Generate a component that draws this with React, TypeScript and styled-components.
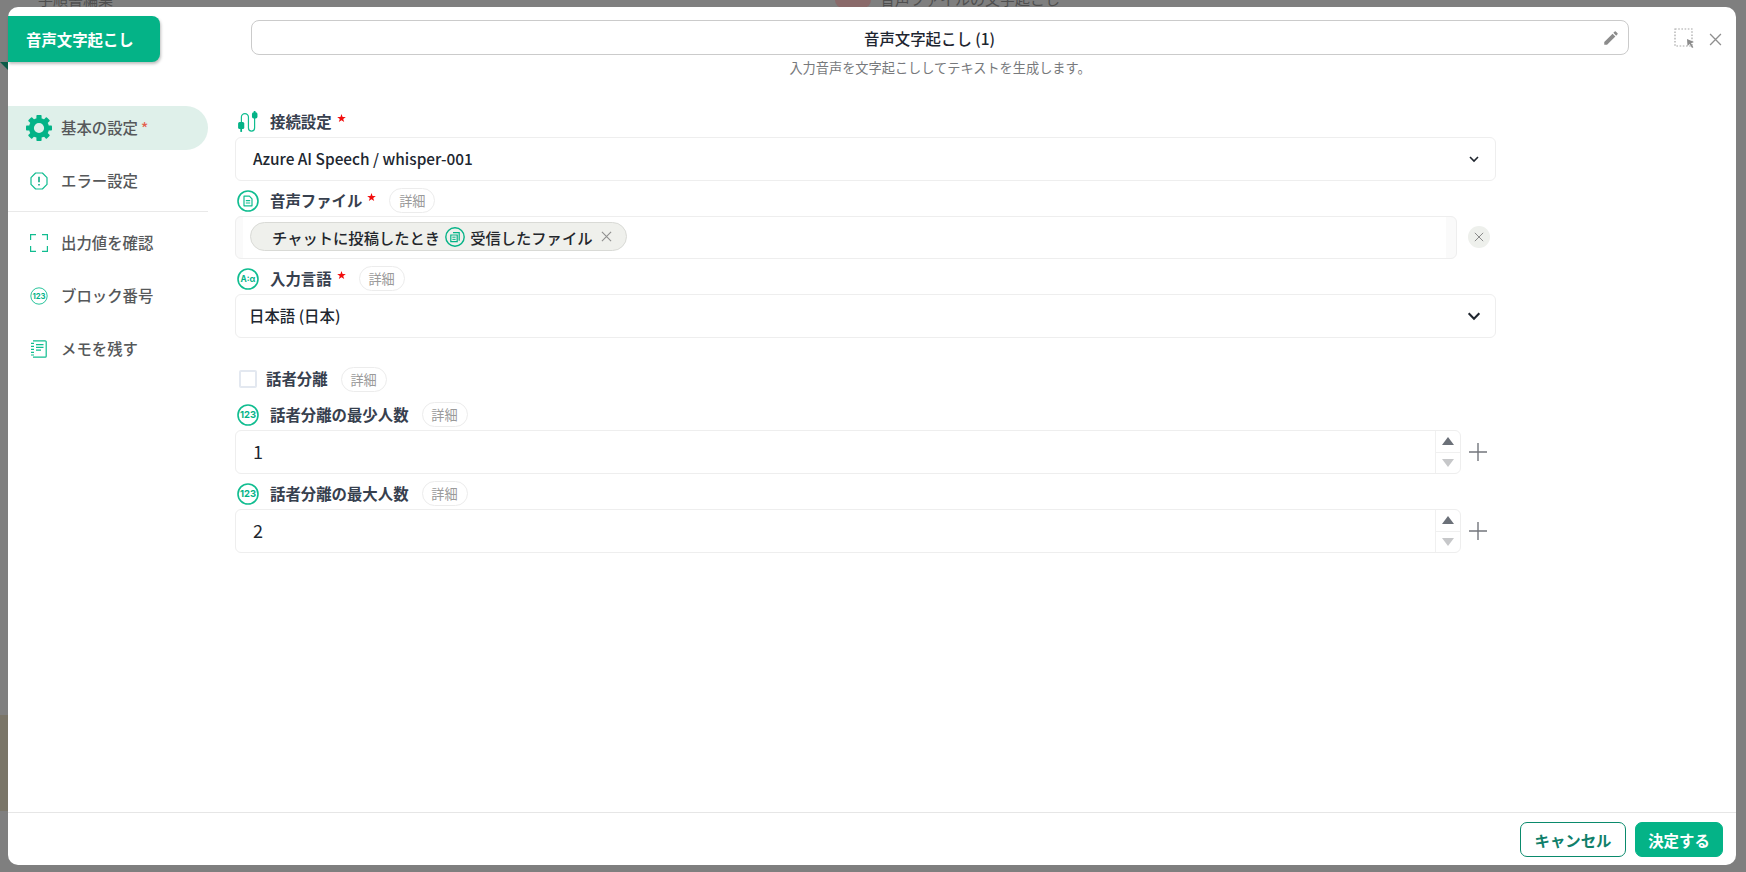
import { ReactNode } from 'react';
import styled, { createGlobalStyle } from 'styled-components';
import { MdEdit } from 'react-icons/md';

const GREEN = '#04b387';
const LINE_GREEN = '#10bd90';

const GlobalStyle = createGlobalStyle`
  * { box-sizing: border-box; }
  html, body { margin: 0; padding: 0; height: 100%; overflow: hidden; }
  body { font-family: "Noto Sans CJK JP", "Noto Sans", sans-serif; }
`;

const Backdrop = styled.div`
  position: relative;
  width: 1746px;
  height: 872px;
  padding: 7px 10px 7px 8px;
  background: #7f7f7f;
  overflow: hidden;
`;

const GhostText = styled.span<{ $left: number; $top: number }>`
  position: absolute;
  left: ${(p) => p.$left}px;
  top: ${(p) => p.$top}px;
  font-size: 15px;
  line-height: 20px;
  white-space: nowrap;
  color: #4f4f4f;
`;

const GhostBadge = styled.span`
  position: absolute;
  left: 835px;
  top: -28px;
  width: 36px;
  height: 36px;
  border-radius: 8px;
  background: #8a6a6a;
`;

const GhostBand = styled.span`
  position: absolute;
  left: 0;
  top: 715px;
  width: 8px;
  height: 96px;
  background: #7a7568;
`;

const Modal = styled.div`
  position: relative;
  display: flex;
  flex-direction: column;
  width: 100%;
  height: 100%;
  background: #fff;
  border-radius: 10px;
`;

const Header = styled.header`
  display: flex;
  align-items: flex-start;
  height: 99px;
  padding-top: 9px;
`;

const Tag = styled.div`
  position: relative;
  flex: none;
  display: flex;
  align-items: center;
  width: 152px;
  height: 46px;
  padding-left: 18px;
  background: ${GREEN};
  border-radius: 0 8px 8px 0;
  box-shadow: 1px 2px 3px rgba(0, 0, 0, 0.25);
  color: #fff;
  font-size: 15.4px;
  font-weight: 700;
  &::before {
    content: '';
    position: absolute;
    left: -8px;
    top: 46px;
    border-top: 8px solid #0b5c48;
    border-left: 8px solid transparent;
  }
`;

const TitleColumn = styled.div`
  display: flex;
  flex-direction: column;
  align-items: center;
  width: 1378px;
  margin: 4px 0 0 91px;
`;

const TitleBox = styled.div`
  position: relative;
  display: flex;
  align-items: center;
  justify-content: center;
  width: 100%;
  height: 35px;
  padding: 1px 21px 0 0;
  border: 1px solid #cbcbcb;
  border-radius: 8px;
  font-size: 15.4px;
  font-weight: 500;
  color: #1e2530;
  svg {
    position: absolute;
    right: 8px;
    top: 8px;
    color: #8c8c8c;
  }
`;

const Subtitle = styled.div`
  margin-top: 3px;
  font-size: 13.2px;
  line-height: 19px;
  color: #77797c;
`;

const HeaderActions = styled.div`
  display: flex;
  align-items: center;
  gap: 13px;
  margin: 12px 0 0 45px;
`;

const IconButton = styled.span`
  display: flex;
  color: #8f8f8f;
`;

const Body = styled.div`
  flex: 1;
  display: flex;
  min-height: 0;
`;

const Sidebar = styled.nav`
  flex: none;
  display: flex;
  flex-direction: column;
  width: 200px;
`;

const NavItem = styled.div<{ $active?: boolean }>`
  display: flex;
  align-items: center;
  height: 44px;
  margin-bottom: 9px;
  background: ${(p) => (p.$active ? '#dff0ea' : 'transparent')};
  border-radius: 0 22px 22px 0;
  font-size: 15.4px;
  font-weight: 500;
  color: #56585a;
`;

const NavIcon = styled.span`
  flex: none;
  display: flex;
  align-items: center;
  justify-content: center;
  width: 53px;
  padding-left: 9px;
`;

const NavText = styled.span`
  margin-top: -2px;
`;

const NavStar = styled.span`
  margin: -2px 0 0 3px;
  font-size: 15px;
  color: #e4604e;
`;

const NavDivider = styled.hr`
  width: 100%;
  height: 1px;
  margin: -1px 0 9px;
  border: 0;
  background: #e9e9e9;
`;

const Form = styled.main`
  flex: 1;
  display: flex;
  flex-direction: column;
  padding: 3px 0 0 27px;
`;

const LabelRow = styled.div<{ $gap?: number }>`
  display: flex;
  align-items: center;
  height: 25px;
  margin-top: ${(p) => p.$gap ?? 7}px;
  margin-bottom: 3px;
`;

const RowIcon = styled.span`
  flex: none;
  display: flex;
  align-items: center;
  justify-content: center;
  width: 26px;
  margin-right: 9px;
`;

const FieldLabel = styled.span`
  margin-top: -2px;
  font-size: 15.4px;
  font-weight: 700;
  color: #37404e;
`;

const Required = styled.span`
  display: flex;
  margin: -7px 0 0 5px;
  color: #f20d0d;
`;

const DetailPill = styled.span`
  display: flex;
  align-items: center;
  justify-content: center;
  width: 46px;
  height: 25px;
  margin-left: 13px;
  border: 1px solid #ececec;
  border-radius: 13px;
  font-size: 13.2px;
  color: #9a9a9a;
`;

const Select = styled.div<{ $inset: number }>`
  display: flex;
  align-items: center;
  justify-content: space-between;
  width: 1261px;
  height: 44px;
  padding: 0 ${(p) => (p.$inset === 17 ? 15 : 13)}px 3px ${(p) => p.$inset}px;
  border: 1px solid #eeeeee;
  border-radius: 6px;
  font-size: 15.4px;
  font-weight: 500;
  color: #20262f;
  svg {
    margin-top: 2px;
  }
`;

const FileRow = styled.div`
  display: flex;
  align-items: center;
`;

const FileBox = styled.div`
  display: flex;
  align-items: center;
  width: 1222px;
  height: 43px;
  padding: 0 0 2px 14px;
  border: 1px solid #eeeeee;
  border-radius: 6px;
  background: linear-gradient(
    to right,
    #fafafa 7px,
    #fff 7px,
    #fff calc(100% - 10px),
    #fafafa calc(100% - 10px)
  );
`;

const Chip = styled.div`
  display: flex;
  align-items: center;
  height: 29px;
  padding: 0 14px 0 21px;
  background: #eff0ec;
  border: 1px solid #d9dad6;
  border-radius: 15px;
  font-size: 15.3px;
  font-weight: 500;
  color: #23262b;
  svg {
    flex: none;
  }
`;

const ChipIcon = styled.span`
  display: flex;
  margin: 0 5px;
`;

const ChipClose = styled.span`
  display: flex;
  margin-left: 8px;
  color: #8f8f8f;
`;

const ClearButton = styled.span`
  display: flex;
  align-items: center;
  justify-content: center;
  width: 22px;
  height: 22px;
  margin: -2px 0 0 11px;
  border-radius: 50%;
  background: #eef0ec;
  color: #8a8a8a;
`;

const CheckRow = styled.div`
  display: flex;
  align-items: center;
  height: 24px;
  margin-top: 29px;
  margin-bottom: 11px;
  padding-left: 4px;
`;

const CheckBox = styled.span`
  width: 18px;
  height: 18px;
  margin-right: 9px;
  border: 2px solid #e3e8f0;
  border-radius: 2px;
`;

const NumberRow = styled.div`
  display: flex;
  align-items: center;
`;

const NumberBox = styled.div`
  display: flex;
  width: 1226px;
  height: 44px;
  border: 1px solid #eeeeee;
  border-radius: 6px;
`;

const NumberValue = styled.div`
  flex: 1;
  display: flex;
  align-items: center;
  padding: 0 0 2px 17px;
  font-size: 18px;
  color: #20262f;
`;

const Spin = styled.div`
  flex: none;
  display: flex;
  flex-direction: column;
  width: 25px;
  border-left: 1px solid #f0f0f0;
`;

const SpinCell = styled.span<{ $first?: boolean }>`
  flex: 1;
  display: flex;
  align-items: center;
  justify-content: center;
  border-bottom: ${(p) => (p.$first ? '1px solid #f0f0f0' : 'none')};
`;

const Arrow = styled.span<{ $down?: boolean }>`
  width: 0;
  height: 0;
  border-left: 6px solid transparent;
  border-right: 6px solid transparent;
  ${(p) =>
    p.$down
      ? 'border-top: 8px solid #c6c7c9;'
      : 'border-bottom: 8px solid #6b7078;'}
`;

const AddButton = styled.span`
  display: flex;
  margin-left: 8px;
  color: #73767c;
`;

const Footer = styled.footer`
  flex: none;
  display: flex;
  justify-content: flex-end;
  gap: 9px;
  height: 53px;
  padding: 9px 13px 0 0;
  border-top: 1px solid #e6e6e6;
`;

const Button = styled.button<{ $primary?: boolean }>`
  height: 35px;
  width: ${(p) => (p.$primary ? 88 : 106)}px;
  padding: 0;
  border: 1px solid ${(p) => (p.$primary ? GREEN : '#0a8a6c')};
  border-radius: 7px;
  background: ${(p) => (p.$primary ? GREEN : '#fff')};
  color: ${(p) => (p.$primary ? '#fff' : '#10806a')};
  font-family: inherit;
  font-size: 15.4px;
  font-weight: 700;
`;

function Cross({ size, width = 1.2 }: { size: number; width?: number }) {
  return (
    <svg width={size} height={size} viewBox="0 0 12 12" fill="none" stroke="currentColor" strokeWidth={width}>
      <path d="M1 1l10 10M11 1L1 11" />
    </svg>
  );
}

function Chevron({ size }: { size: number }) {
  return (
    <svg width={size} height={size} viewBox="0 0 12 12" fill="none" stroke="#20262f" strokeWidth="1.6">
      <path d="M2 4l4 4 4-4" />
    </svg>
  );
}

function Star() {
  return (
    <svg width="9" height="9" viewBox="0 0 10 10" fill="currentColor">
      <path d="M5 0l1.2 3.3 3.6.1-2.9 2.1 1.1 3.5L5 7l-3 2 1.1-3.5L.2 3.4l3.6-.1z" />
    </svg>
  );
}

function Gear() {
  const teeth = [0, 45, 90, 135, 180, 225, 270, 315];
  return (
    <svg width="26" height="26" viewBox="0 0 26 26">
      {teeth.map((deg) => (
        <rect key={deg} x="10.4" y="0" width="5.2" height="6" rx="0.8" fill={GREEN} transform={`rotate(${deg} 13 13)`} />
      ))}
      <circle cx="13" cy="13" r="7.6" fill="none" stroke={GREEN} strokeWidth="5" />
    </svg>
  );
}

function AlertIcon() {
  return (
    <svg width="18" height="18" viewBox="0 0 18 18" fill="none" stroke={LINE_GREEN} strokeWidth="1.2">
      <path d="M5.6 1h6.8L17 5.6v6.8L12.4 17H5.6L1 12.4V5.6z" strokeLinejoin="round" />
      <path d="M9 4.8v5.4M9 12v1.4" strokeWidth="1.6" stroke="#0fa884" />
    </svg>
  );
}

function FrameIcon() {
  return (
    <svg width="18" height="18" viewBox="0 0 18 18" fill="none" stroke={LINE_GREEN} strokeWidth="1.2">
      <path d="M6 .6H.6V6M12 .6h5.4V6M6 17.4H.6V12M12 17.4h5.4V12" />
    </svg>
  );
}

function CountIcon({ size }: { size: number }) {
  return (
    <svg width={size} height={size} viewBox="0 0 22 22">
      <circle cx="11" cy="11" r="10" fill="none" stroke={LINE_GREEN} strokeWidth={size > 20 ? 1.6 : 1.1} />
      <text x="11" y="14.4" textAnchor="middle" fontSize="9.4" fontWeight="700" fontFamily="Inter, sans-serif" fill={GREEN}>
        123
      </text>
    </svg>
  );
}

function MemoIcon() {
  return (
    <svg width="18" height="18" viewBox="0 0 18 18" fill="none" stroke={LINE_GREEN} strokeWidth="1.2">
      <path d="M3 .8h12.2a1 1 0 011 1v14.4a1 1 0 01-1 1H3" />
      <path d="M1 3.4h3M1 6.4h3M1 9.4h3M1 12.4h3M1 15h3" />
      <path d="M6 4.6h7.5M6 7.4h7.5M6 10.2h5" />
    </svg>
  );
}

function PlugIcon() {
  return (
    <svg width="22" height="22" viewBox="0 0 20 20" fill="none">
      <path d="M4 10V5.5a3.2 3.2 0 016.4 0v10a2.8 2.8 0 005.6 0V6" stroke={LINE_GREEN} strokeWidth="1.1" />
      <rect x="1" y="10" width="5.6" height="6.4" rx="1.4" fill={GREEN} />
      <path d="M3.8 16v3" stroke={GREEN} strokeWidth="1.6" />
      <rect x="13.6" y="1.2" width="5" height="5.6" rx="1.6" fill={GREEN} />
      <path d="M16 0v2" stroke={GREEN} strokeWidth="1.6" />
    </svg>
  );
}

function FileIcon() {
  return (
    <svg width="22" height="22" viewBox="0 0 22 22" fill="none" stroke={LINE_GREEN}>
      <circle cx="11" cy="11" r="10" strokeWidth="1.6" />
      <path d="M7 6.2h5.4L15 8.8v7H7z" strokeWidth="1.2" strokeLinejoin="round" />
      <path d="M8.8 10.6h4.4M8.8 13h4.4" strokeWidth="1.1" />
    </svg>
  );
}

function StackIcon() {
  return (
    <svg width="20" height="20" viewBox="0 0 20 20" fill="none" stroke={GREEN}>
      <circle cx="10" cy="10" r="9.2" strokeWidth="1.4" />
      <path d="M8 5.6h6.2v8.2" strokeWidth="1.2" />
      <path d="M5.8 8h6.4v6.6H5.8z" strokeWidth="1.2" />
      <path d="M7.4 10.2h3.2M7.4 12.4h3.2" strokeWidth="1" />
    </svg>
  );
}

function LangIcon() {
  return (
    <svg width="22" height="22" viewBox="0 0 22 22">
      <circle cx="11" cy="11" r="10" fill="none" stroke={LINE_GREEN} strokeWidth="1.6" />
      <text x="11" y="14" textAnchor="middle" fontSize="8.4" fontWeight="700" fontFamily="Inter, sans-serif" fill={GREEN}>
        A:α
      </text>
    </svg>
  );
}

function SelectCursorIcon() {
  return (
    <svg width="22" height="22" viewBox="0 0 22 22" fill="none">
      <path d="M1 1h17v17H1z" stroke="#a5a5a5" strokeWidth="1.2" strokeDasharray="1.6 1.6" />
      <path d="M13 11l7 3-3 1.2 2.4 4-1.4.8-2.3-4-2.2 2z" fill="#8c8c8c" />
    </svg>
  );
}

function PlusIcon() {
  return (
    <svg width="18" height="18" viewBox="0 0 18 18" fill="none" stroke="currentColor" strokeWidth="1.4">
      <path d="M9 0v18M0 9h18" />
    </svg>
  );
}

function Label({ icon, text, required, detail }: { icon: ReactNode; text: string; required?: boolean; detail?: boolean }) {
  return (
    <>
      <RowIcon>{icon}</RowIcon>
      <FieldLabel>{text}</FieldLabel>
      {required && (
        <Required>
          <Star />
        </Required>
      )}
      {detail && <DetailPill>詳細</DetailPill>}
    </>
  );
}

function NumberField({ value }: { value: string }) {
  return (
    <NumberRow>
      <NumberBox>
        <NumberValue>{value}</NumberValue>
        <Spin>
          <SpinCell $first>
            <Arrow />
          </SpinCell>
          <SpinCell>
            <Arrow $down />
          </SpinCell>
        </Spin>
      </NumberBox>
      <AddButton>
        <PlusIcon />
      </AddButton>
    </NumberRow>
  );
}

export default function App() {
  return (
    <>
      <GlobalStyle />
      <Backdrop>
        <GhostBand />
        <GhostBadge />
        <GhostText $left={38} $top={-11}>手順書編集</GhostText>
        <GhostText $left={880} $top={-11}>音声ファイルの文字起こし</GhostText>
        <Modal>
          <Header>
            <Tag>音声文字起こし</Tag>
            <TitleColumn>
              <TitleBox>
                音声文字起こし (1)
                <MdEdit size={18} />
              </TitleBox>
              <Subtitle>入力音声を文字起こししてテキストを生成します。</Subtitle>
            </TitleColumn>
            <HeaderActions>
              <IconButton>
                <SelectCursorIcon />
              </IconButton>
              <IconButton>
                <Cross size={13} />
              </IconButton>
            </HeaderActions>
          </Header>
          <Body>
            <Sidebar>
              <NavItem $active>
                <NavIcon>
                  <Gear />
                </NavIcon>
                <NavText>基本の設定</NavText>
                <NavStar>*</NavStar>
              </NavItem>
              <NavItem>
                <NavIcon>
                  <AlertIcon />
                </NavIcon>
                <NavText>エラー設定</NavText>
              </NavItem>
              <NavDivider />
              <NavItem>
                <NavIcon>
                  <FrameIcon />
                </NavIcon>
                <NavText>出力値を確認</NavText>
              </NavItem>
              <NavItem>
                <NavIcon>
                  <CountIcon size={18} />
                </NavIcon>
                <NavText>ブロック番号</NavText>
              </NavItem>
              <NavItem>
                <NavIcon>
                  <MemoIcon />
                </NavIcon>
                <NavText>メモを残す</NavText>
              </NavItem>
            </Sidebar>
            <Form>
              <LabelRow $gap={0}>
                <Label icon={<PlugIcon />} text="接続設定" required />
              </LabelRow>
              <Select $inset={17}>
                Azure AI Speech / whisper-001
                <Chevron size={12} />
              </Select>
              <LabelRow>
                <Label icon={<FileIcon />} text="音声ファイル" required detail />
              </LabelRow>
              <FileRow>
                <FileBox>
                  <Chip>
                    チャットに投稿したとき
                    <ChipIcon>
                      <StackIcon />
                    </ChipIcon>
                    受信したファイル
                    <ChipClose>
                      <Cross size={11} />
                    </ChipClose>
                  </Chip>
                </FileBox>
                <ClearButton>
                  <Cross size={10} />
                </ClearButton>
              </FileRow>
              <LabelRow>
                <Label icon={<LangIcon />} text="入力言語" required detail />
              </LabelRow>
              <Select $inset={13}>
                日本語 (日本)
                <Chevron size={16} />
              </Select>
              <CheckRow>
                <CheckBox />
                <FieldLabel>話者分離</FieldLabel>
                <DetailPill>詳細</DetailPill>
              </CheckRow>
              <LabelRow $gap={0}>
                <Label icon={<CountIcon size={22} />} text="話者分離の最少人数" detail />
              </LabelRow>
              <NumberField value="1" />
              <LabelRow>
                <Label icon={<CountIcon size={22} />} text="話者分離の最大人数" detail />
              </LabelRow>
              <NumberField value="2" />
            </Form>
          </Body>
          <Footer>
            <Button>キャンセル</Button>
            <Button $primary>決定する</Button>
          </Footer>
        </Modal>
      </Backdrop>
    </>
  );
}
